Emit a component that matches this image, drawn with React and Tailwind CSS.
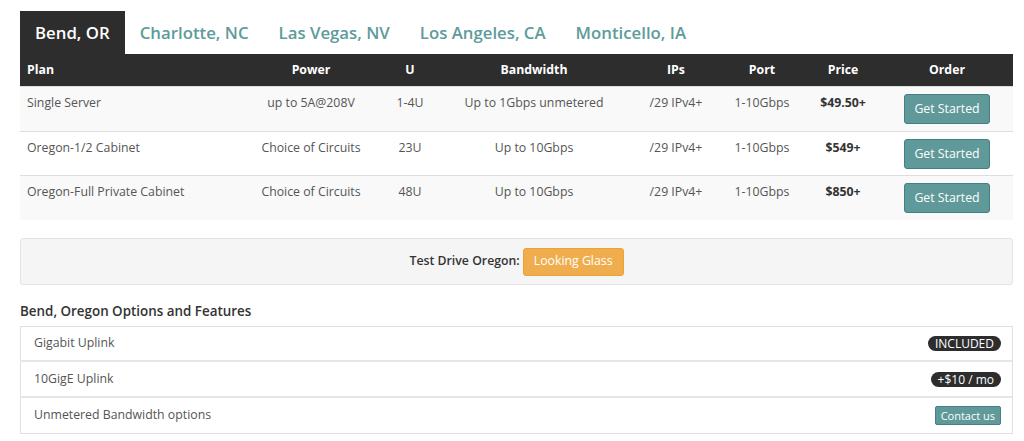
import { useState } from "react";

const plans = [
  { name: "Single Server", power: "up to 5A@208V", u: "1-4U", bw: "Up to 1Gbps unmetered", ips: "/29 IPv4+", port: "1-10Gbps", price: "$49.50+", h: "h-[45px]" },
  { name: "Oregon-1/2 Cabinet", power: "Choice of Circuits", u: "23U", bw: "Up to 10Gbps", ips: "/29 IPv4+", port: "1-10Gbps", price: "$549+", h: "h-[44px]" },
  { name: "Oregon-Full Private Cabinet", power: "Choice of Circuits", u: "48U", bw: "Up to 10Gbps", ips: "/29 IPv4+", port: "1-10Gbps", price: "$850+", h: "h-[45px]" },
];

const tabs = ["Bend, OR", "Charlotte, NC", "Las Vegas, NV", "Los Angeles, CA", "Monticello, IA"];

const cols = "grid grid-cols-[221px_140px_58px_190px_94px_78px_84px_128px]";

export default function App() {
  const [active, setActive] = useState(0);

  return (
    <div className="min-h-screen bg-white px-5 pt-[11px] font-['Open_Sans',sans-serif] text-[12.3px] text-[#555]">
      <div className="flex">
        {tabs.map((t, i) => (
          <button
            key={t}
            onClick={() => setActive(i)}
            className={
              i === active
                ? "h-[43px] px-[15px] bg-[#2d2d2d] text-[16.8px] font-semibold text-white"
                : "h-[43px] px-[15px] text-[16.8px] font-semibold text-[#5e9b9b]"
            }
          >
            {t}
          </button>
        ))}
      </div>

      <div className="w-[993px]">
        <div className={`${cols} h-[32px] items-center bg-[#2d2d2d] font-bold text-white text-[12.3px]`}>
          <div className="pl-[7px]">Plan</div>
          <div className="text-center">Power</div>
          <div className="text-center">U</div>
          <div className="text-center">Bandwidth</div>
          <div className="text-center">IPs</div>
          <div className="text-center">Port</div>
          <div className="text-center">Price</div>
          <div className="pr-[4px] text-center">Order</div>
        </div>
        {plans.map((p, i) => (
          <div
            key={p.name}
            className={`${cols} ${p.h} border-t border-[#dedede] pt-[7px] leading-[18px] ${i % 2 === 0 ? "bg-[#f9f9f9]" : "bg-white"}`}
          >
            <div className="pl-[7px]">{p.name}</div>
            <div className="text-center">{p.power}</div>
            <div className="text-center">{p.u}</div>
            <div className="text-center">{p.bw}</div>
            <div className="text-center">{p.ips}</div>
            <div className="text-center">{p.port}</div>
            <div className="text-center font-bold text-[#333]">{p.price}</div>
            <div className="flex justify-center pr-[4px]">
              <button className="h-[30px] w-[86px] rounded-[3px] border border-[#457f83] bg-[#5f9999] text-white">
                Get Started
              </button>
            </div>
          </div>
        ))}
      </div>

      <div className="mt-[18px] flex h-[47px] w-[993px] items-center justify-center gap-[3px] rounded-[3px] border border-[#e3e3e3] bg-[#f5f5f5]">
        <span className="font-semibold text-[#333]">Test Drive Oregon:</span>
        <button className="h-[28px] rounded-[3px] border border-[#eea236] bg-[#f0ad4e] px-[10px] text-white">
          Looking Glass
        </button>
      </div>

      <h4 className="mt-[16px] mb-[5px] text-[13.4px] font-semibold leading-[20px] text-[#333]">
        Bend, Oregon Options and Features
      </h4>

      <div className="w-[993px] border border-[#e0e0e0] divide-y-2 divide-[#e6e6e6]">
        <div className="flex h-[35px] items-center justify-between pl-[13px] pr-[11px]">
          <span>Gigabit Uplink</span>
          <span className="rounded-full bg-[#2d2d2d] px-[7px] text-[12px] leading-[15px] text-white">INCLUDED</span>
        </div>
        <div className="flex h-[36px] items-center justify-between pl-[13px] pr-[11px]">
          <span>10GigE Uplink</span>
          <span className="rounded-full bg-[#2d2d2d] px-[7px] text-[12px] leading-[15px] text-white">+$10 / mo</span>
        </div>
        <div className="flex h-[35px] items-center justify-between pl-[13px] pr-[11px]">
          <span>Unmetered Bandwidth options</span>
          <button className="h-[19px] rounded-[2px] border border-[#457f83] bg-[#5f9999] px-[5px] text-[11px] leading-[17px] text-white">
            Contact us
          </button>
        </div>
      </div>
    </div>
  );
}
